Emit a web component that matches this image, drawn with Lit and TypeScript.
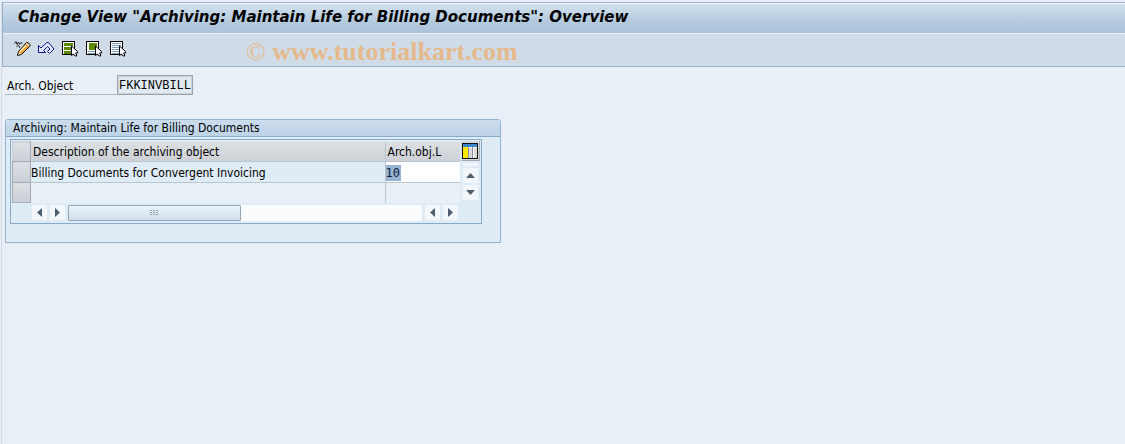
import { LitElement, html, css, svg } from "lit";
import { customElement } from "lit/decorators.js";

const arrows: Record<string, string> = {
  left: "M10 3v9L5 7.5z",
  right: "M5 3v9l5-4.5z",
  up: "M3 10h9L7.5 5z",
  down: "M3 5h9L7.5 10z",
};

const cursor = svg`<path d="M9.500 6V15.500L11.500 14L13 16H14.500V14L13.500 13H15.500V11.500Z" fill="#fff" stroke="#000"/>`;

const icons = {
  edit: svg`
    <path d="M0.500 3.500L2 1.500L3 4.500L4.500 2L5.500 4.500L7 2.500L8.500 3.500" fill="none" stroke="#222"/>
    <path d="M2.500 6.500L4.500 5.500L6 8" fill="none" stroke="#222"/>
    <path d="M3.500 15.500L4.500 11.500L12.500 2.500H14L16 4.500V6L7.500 14.500Z" fill="#f4a02c" stroke="#111"/>
    <path d="M12 4L13 3L15.500 5.500L14.500 6.500Z" fill="#cfd4ea"/>
    <path d="M6 11.500L12 5.500" stroke="#ffeeb8" stroke-width="1.500"/>
    <path d="M5 12L7 14L4.500 14.500Z" fill="#fff"/>`,
  undo: svg`
    <path d="M0.500 5.500V12.500H7.500L5.500 10.500L9.500 6.500L12 9L9.500 11.500L11.500 13.500L16 9L10.500 2.500H9L3 8Z" fill="#e3ebf6" stroke="#101090"/>`,
  all: svg`
    <rect x="0.500" y="1.500" width="12" height="13" fill="#fff" stroke="#000"/>
    <path d="M2 3h9v3H2zM2 7h9v3H2zM2 11h9v3H2z" fill="#5c8a00"/>${cursor}`,
  block: svg`
    <rect x="0.500" y="1.500" width="12" height="13" fill="#fff" stroke="#000"/>
    <path d="M3 3h8v7H3z" fill="#5c8a00"/>
    <path d="M2 11.500h9M2 13.500h9" stroke="#7f9cb5"/>${cursor}`,
  none: svg`
    <rect x="0.500" y="1.500" width="12" height="13" fill="#fff" stroke="#000"/>
    <path d="M2 3.500h9M2 5.500h9M2 7.500h9M2 9.500h9M2 11.500h9M2 13.500h9" stroke="#7f9cb5"/>${cursor}`,
};

@customElement("app-root")
export class AppRoot extends LitElement {
  static styles = css`
    :host {
      display: block;
      min-height: 100vh;
      box-sizing: border-box;
      padding: 2px 0 0 1px;
      background: #e8eff6;
      color: #000;
      font: 12px/16px "DejaVu Sans Condensed", "DejaVu Sans", sans-serif;
    }
    * {
      box-sizing: border-box;
    }
    button {
      padding: 0;
      border: 0;
      background: none;
      display: grid;
      place-items: center;
    }
    svg {
      display: block;
    }
    .page {
      min-height: calc(100vh - 2px);
      border-left: 1px solid #d3dce6;
    }
    .top {
      border: 1px solid #9db2c8;
      border-right: 0;
    }
    .title {
      margin: 0;
      height: 31px;
      padding: 0 15px;
      border-top: 1px solid #eef4fa;
      border-bottom: 1px solid #e8f0f8;
      background: linear-gradient(#d3e1ef, #b4cadd 60%, #abc2dc);
      font-family: "DejaVu Sans", sans-serif;
      font-size: 15px;
      line-height: 26px;
      font-weight: bold;
      font-style: italic;
      white-space: nowrap;
    }
    .bar {
      display: flex;
      align-items: flex-start;
      height: 32px;
      padding-left: 11px;
      background: #cfdce7;
    }
    .tools {
      display: flex;
      gap: 7px;
      padding-top: 6px;
    }
    .mark {
      margin-left: 119px;
      color: #e5b98b;
      font: bold 26px/36px "Liberation Serif", serif;
    }
    .mark span {
      font-weight: normal;
    }
    .field {
      display: flex;
      margin: 8px 3px 0;
      height: 20px;
    }
    .field label {
      width: 112px;
      padding: 3px 2px 0;
      border-bottom: 1px solid #b4b8bc;
    }
    .field input {
      width: 76px;
      padding: 2px 1px 0;
      border: 1px solid #9ea4aa;
      box-shadow: inset 0 0 0 1px #c8d2dc;
      background: #e0eaf3;
      color: #000;
      font: 12px "Liberation Mono", monospace;
      border-radius: 0;
    }
    .group {
      width: 496px;
      max-width: 100%;
      margin: 24px 3px 0;
      border: 1px solid #94b1d0;
      border-radius: 3px 3px 0 0;
      background: #dfebf5;
      padding-bottom: 18px;
    }
    .group h2 {
      margin: 0 0 2px;
      height: 17px;
      padding-left: 7px;
      border-bottom: 1px solid #88a9ca;
      background: linear-gradient(#cbdded, #bdd3e8);
      font: inherit;
    }
    .grid {
      margin: 0 18px 0 4px;
      border: 1px solid #88a9ca;
      height: 85px;
      padding: 1px;
      display: grid;
      grid-template-columns: 1fr 20px;
      grid-template-rows: 62px 1fr;
    }
    table {
      border-collapse: collapse;
      table-layout: fixed;
      width: 100%;
      height: 62px;
    }
    th,
    td {
      padding: 2px 2px 0;
      text-align: left;
      font-weight: normal;
      height: 20px;
      border-bottom: 1px solid #b9c6d2;
      border-right: 1px solid #b9c6d2;
      white-space: nowrap;
    }
    th {
      background: linear-gradient(#dcdfe2, #cdd1d6);
    }
    td {
      padding: 2px 0 0;
      background: #e8eff6;
    }
    tr > :last-child {
      border-right: 0;
    }
    tr:last-child td {
      border-bottom: 0;
    }
    .first td {
      background: #dfebf5;
    }
    .first td.num {
      background: #fff;
    }
    tr .sel,
    tr td.sel,
    tr:last-child td.sel {
      width: 18px;
      padding: 0;
      background: linear-gradient(#dde0e4, #c9ced6);
      border: 1px solid #a3abb5;
    }
    tr th.sel {
      border-color: #ccd1d7 #a3abb5 #a3abb5 #ccd1d7;
    }
    .num {
      width: 75px;
    }
    .num input {
      display: block;
      width: 15px;
      height: 16px;
      padding: 0;
      border: 0;
      background: #97b3d3;
      color: #123;
      font: 12px "DejaVu Sans Mono", monospace;
    }
    .side {
      display: flex;
      flex-direction: column;
      align-items: center;
      gap: 2px;
    }
    .config {
      width: 19px;
      height: 20px;
      flex: none;
      background: #d5dade;
      border-right: 1px solid #a3abb5;
      border-bottom: 1px solid #a3abb5;
    }
    .stub {
      width: 15px;
      height: 3px;
      background: #f3f7fb;
    }
    .arrow {
      width: 15px;
      height: 15px;
      background: #f3f7fb;
      flex: none;
    }
    .scroll {
      display: flex;
      align-items: center;
      gap: 3px;
      padding: 0 2px 0 20px;
    }
    .track {
      flex: 1;
      height: 16px;
      background: #fbfcfd;
    }
    .thumb {
      display: grid;
      place-items: center;
      width: 49%;
      height: 16px;
      border: 1px solid #93a4b4;
      border-radius: 1px;
      background: linear-gradient(#ebf2f9, #cfdeec);
    }
  `;

  private arrow(dir: string, label: string) {
    return html`<button class="arrow" aria-label=${label}>
      <svg width="15" height="15"><path d=${arrows[dir]} fill="#4c5f70" /></svg>
    </button>`;
  }

  private tool(icon: keyof typeof icons, label: string) {
    return html`<button aria-label=${label}>
      <svg width="17" height="17">${icons[icon]}</svg>
    </button>`;
  }

  render() {
    return html`
      <div class="page">
        <header class="top">
          <h1 class="title">Change View "Archiving: Maintain Life for Billing Documents": Overview</h1>
          <div class="bar">
            <div class="tools">
              ${this.tool("edit", "Display or change")} ${this.tool("undo", "Undo")}
              ${this.tool("all", "Select all")} ${this.tool("block", "Select block")}
              ${this.tool("none", "Deselect all")}
            </div>
            <div class="mark"><span>©</span> www.tutorialkart.com</div>
          </div>
        </header>
        <div class="field">
          <label for="object">Arch. Object</label>
          <input id="object" value="FKKINVBILL" readonly />
        </div>
        <section class="group">
          <h2>Archiving: Maintain Life for Billing Documents</h2>
          <div class="grid">
            <table>
              <tr>
                <th class="sel"></th>
                <th>Description of the archiving object</th>
                <th class="num">Arch.obj.L</th>
              </tr>
              <tr class="first">
                <td class="sel"></td>
                <td>Billing Documents for Convergent Invoicing</td>
                <td class="num"><input aria-label="Arch.obj.L" value="10" /></td>
              </tr>
              <tr>
                <td class="sel"></td>
                <td></td>
                <td class="num"></td>
              </tr>
            </table>
            <div class="side">
              <button class="config" aria-label="Table settings">
                <svg width="16" height="16">
                  <rect x="0.500" y="0.500" width="15" height="15" fill="#fff" stroke="#111" />
                  <path d="M1 1h14v3H1z" fill="#3b87c8" />
                  <path d="M1 4h5v11H1z" fill="#ffe800" />
                  <path d="M7 5h3v10H7zM12 5h3v10h-3z" fill="#dcdcdc" />
                  <path d="M6.500 4v11M10.500 4v11" stroke="#889" />
                  <rect x="0.500" y="0.500" width="15" height="15" fill="none" stroke="#111" />
                </svg>
              </button>
              <div class="stub"></div>
              ${this.arrow("up", "Scroll up")} ${this.arrow("down", "Scroll down")}
            </div>
            <div class="scroll">
              ${this.arrow("left", "First column")} ${this.arrow("right", "Scroll right")}
              <div class="track">
                <div class="thumb">
                  <svg width="9" height="5">
                    <path d="M0 .5h9M0 2.500h9M0 4.500h9" stroke="#93a4b4" stroke-dasharray="2 1" />
                  </svg>
                </div>
              </div>
              ${this.arrow("left", "Scroll left")} ${this.arrow("right", "Last column")}
            </div>
          </div>
        </section>
      </div>
    `;
  }
}
